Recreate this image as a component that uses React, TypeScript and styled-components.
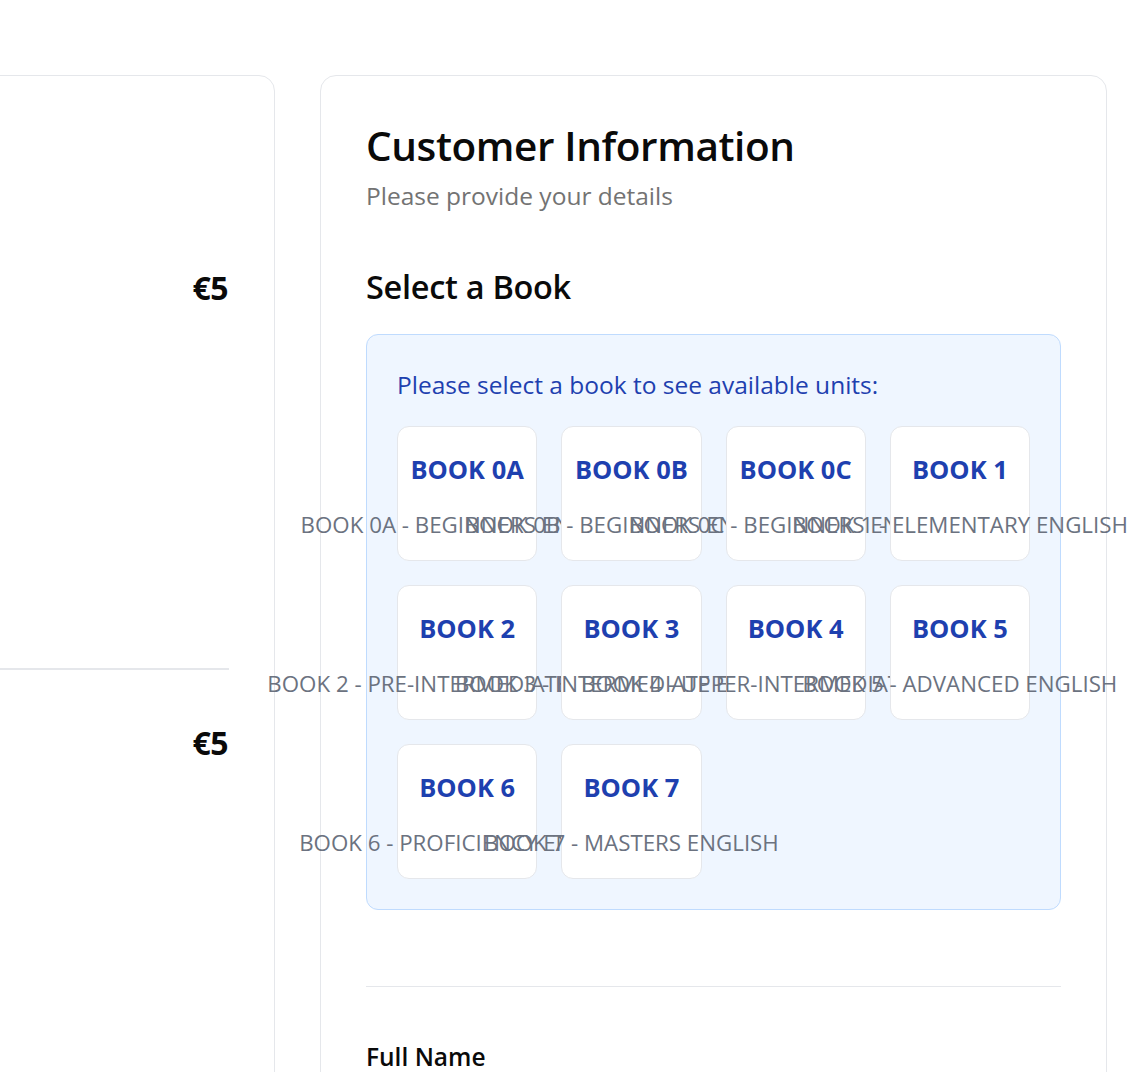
import styled, { createGlobalStyle } from "styled-components";

const GlobalStyle = createGlobalStyle`
  html, body {
    margin: 0;
    padding: 0;
    background: #ffffff;
    overflow: hidden;
  }
  body {
    font-family: "Open Sans", "Noto Sans", "Liberation Sans", sans-serif;
    color: #0a0a0a;
  }
`;

const Page = styled.div`
  display: flex;
  align-items: flex-start;
  gap: 45px;
  padding-top: 75px;
  margin-left: -285px;
`;

const Card = styled.div<{ $width: number }>`
  box-sizing: border-box;
  flex: 0 0 ${(p) => p.$width}px;
  width: ${(p) => p.$width}px;
  min-height: 1100px;
  padding: 45px;
  border: 1px solid #e5e7eb;
  border-radius: 16px;
  background: #ffffff;
`;

const SummaryRow = styled.div<{ $tall?: boolean }>`
  display: flex;
  justify-content: flex-end;
  align-items: flex-start;
  padding: ${(p) => (p.$tall ? "147px 0 0" : "53px 0 0")};
  min-height: ${(p) => (p.$tall ? "400px" : "200px")};
  border-bottom: ${(p) => (p.$tall ? "2px solid #e5e7eb" : "none")};
`;

const Price = styled.span`
  font-size: 32px;
  font-weight: 700;
  line-height: 40px;
  letter-spacing: -0.5px;
  margin-right: 1px;
`;

const Title = styled.h1`
  margin: 0;
  font-size: 40.5px;
  font-weight: 600;
  line-height: 50px;
  letter-spacing: -0.4px;
`;

const Subtitle = styled.p`
  margin: 6px 0 0;
  font-size: 24.5px;
  line-height: 38px;
  color: #737373;
`;

const SectionTitle = styled.h2`
  margin: 52px 0 27px;
  font-size: 32.5px;
  font-weight: 600;
  line-height: 40px;
  letter-spacing: -0.3px;
`;

const BookBox = styled.div`
  padding: 30px;
  border: 1px solid #bfdbfe;
  border-radius: 12px;
  background: #eff6ff;
`;

const Hint = styled.p`
  margin: 3px 0 24px;
  font-size: 24.5px;
  line-height: 34px;
  color: #1e40af;
`;

const BookGrid = styled.div`
  display: grid;
  grid-template-columns: repeat(4, minmax(0, 1fr));
  grid-auto-rows: 135px;
  gap: 24px;
`;

const BookCard = styled.button`
  display: flex;
  flex-direction: column;
  align-items: center;
  justify-content: center;
  gap: 25px;
  min-width: 0;
  padding: 6px 0 0;
  border: 1px solid #e5e7eb;
  border-radius: 12px;
  background: #ffffff;
  font-family: inherit;
  cursor: pointer;
`;

const BookName = styled.span`
  font-size: 25.5px;
  font-weight: 700;
  line-height: 32px;
  color: #1e40af;
  white-space: nowrap;
`;

const BookLevel = styled.span`
  font-size: 22.3px;
  line-height: 30px;
  color: #6b7280;
  white-space: nowrap;
`;

const Divider = styled.hr`
  margin: 76px 0 54px;
  border: 0;
  border-top: 1px solid #e5e7eb;
`;

const Label = styled.label`
  display: block;
  font-size: 24.5px;
  font-weight: 600;
  line-height: 32px;
`;

const books = [
  { name: "BOOK 0A", level: "BOOK 0A - BEGINNERS ENGLISH" },
  { name: "BOOK 0B", level: "BOOK 0B - BEGINNERS ENGLISH" },
  { name: "BOOK 0C", level: "BOOK 0C - BEGINNERS ENGLISH" },
  { name: "BOOK 1", level: "BOOK 1 - ELEMENTARY ENGLISH" },
  { name: "BOOK 2", level: "BOOK 2 - PRE-INTERMEDIATE ENGLISH" },
  { name: "BOOK 3", level: "BOOK 3 - INTERMEDIATE ENGLISH" },
  { name: "BOOK 4", level: "BOOK 4 - UPPER-INTERMEDIATE ENGLISH" },
  { name: "BOOK 5", level: "BOOK 5 - ADVANCED ENGLISH" },
  { name: "BOOK 6", level: "BOOK 6 - PROFICIENCY ENGLISH" },
  { name: "BOOK 7", level: "BOOK 7 - MASTERS ENGLISH" },
];

export default function App() {
  return (
    <>
      <GlobalStyle />
      <Page>
        <Card $width={560}>
          <SummaryRow $tall>
            <Price>€5</Price>
          </SummaryRow>
          <SummaryRow>
            <Price>€5</Price>
          </SummaryRow>
        </Card>
        <Card $width={787}>
          <Title>Customer Information</Title>
          <Subtitle>Please provide your details</Subtitle>
          <SectionTitle>Select a Book</SectionTitle>
          <BookBox>
            <Hint>Please select a book to see available units:</Hint>
            <BookGrid>
              {books.map((book) => (
                <BookCard key={book.name} type="button">
                  <BookName>{book.name}</BookName>
                  <BookLevel>{book.level}</BookLevel>
                </BookCard>
              ))}
            </BookGrid>
          </BookBox>
          <Divider />
          <Label htmlFor="full-name">Full Name</Label>
        </Card>
      </Page>
    </>
  );
}
